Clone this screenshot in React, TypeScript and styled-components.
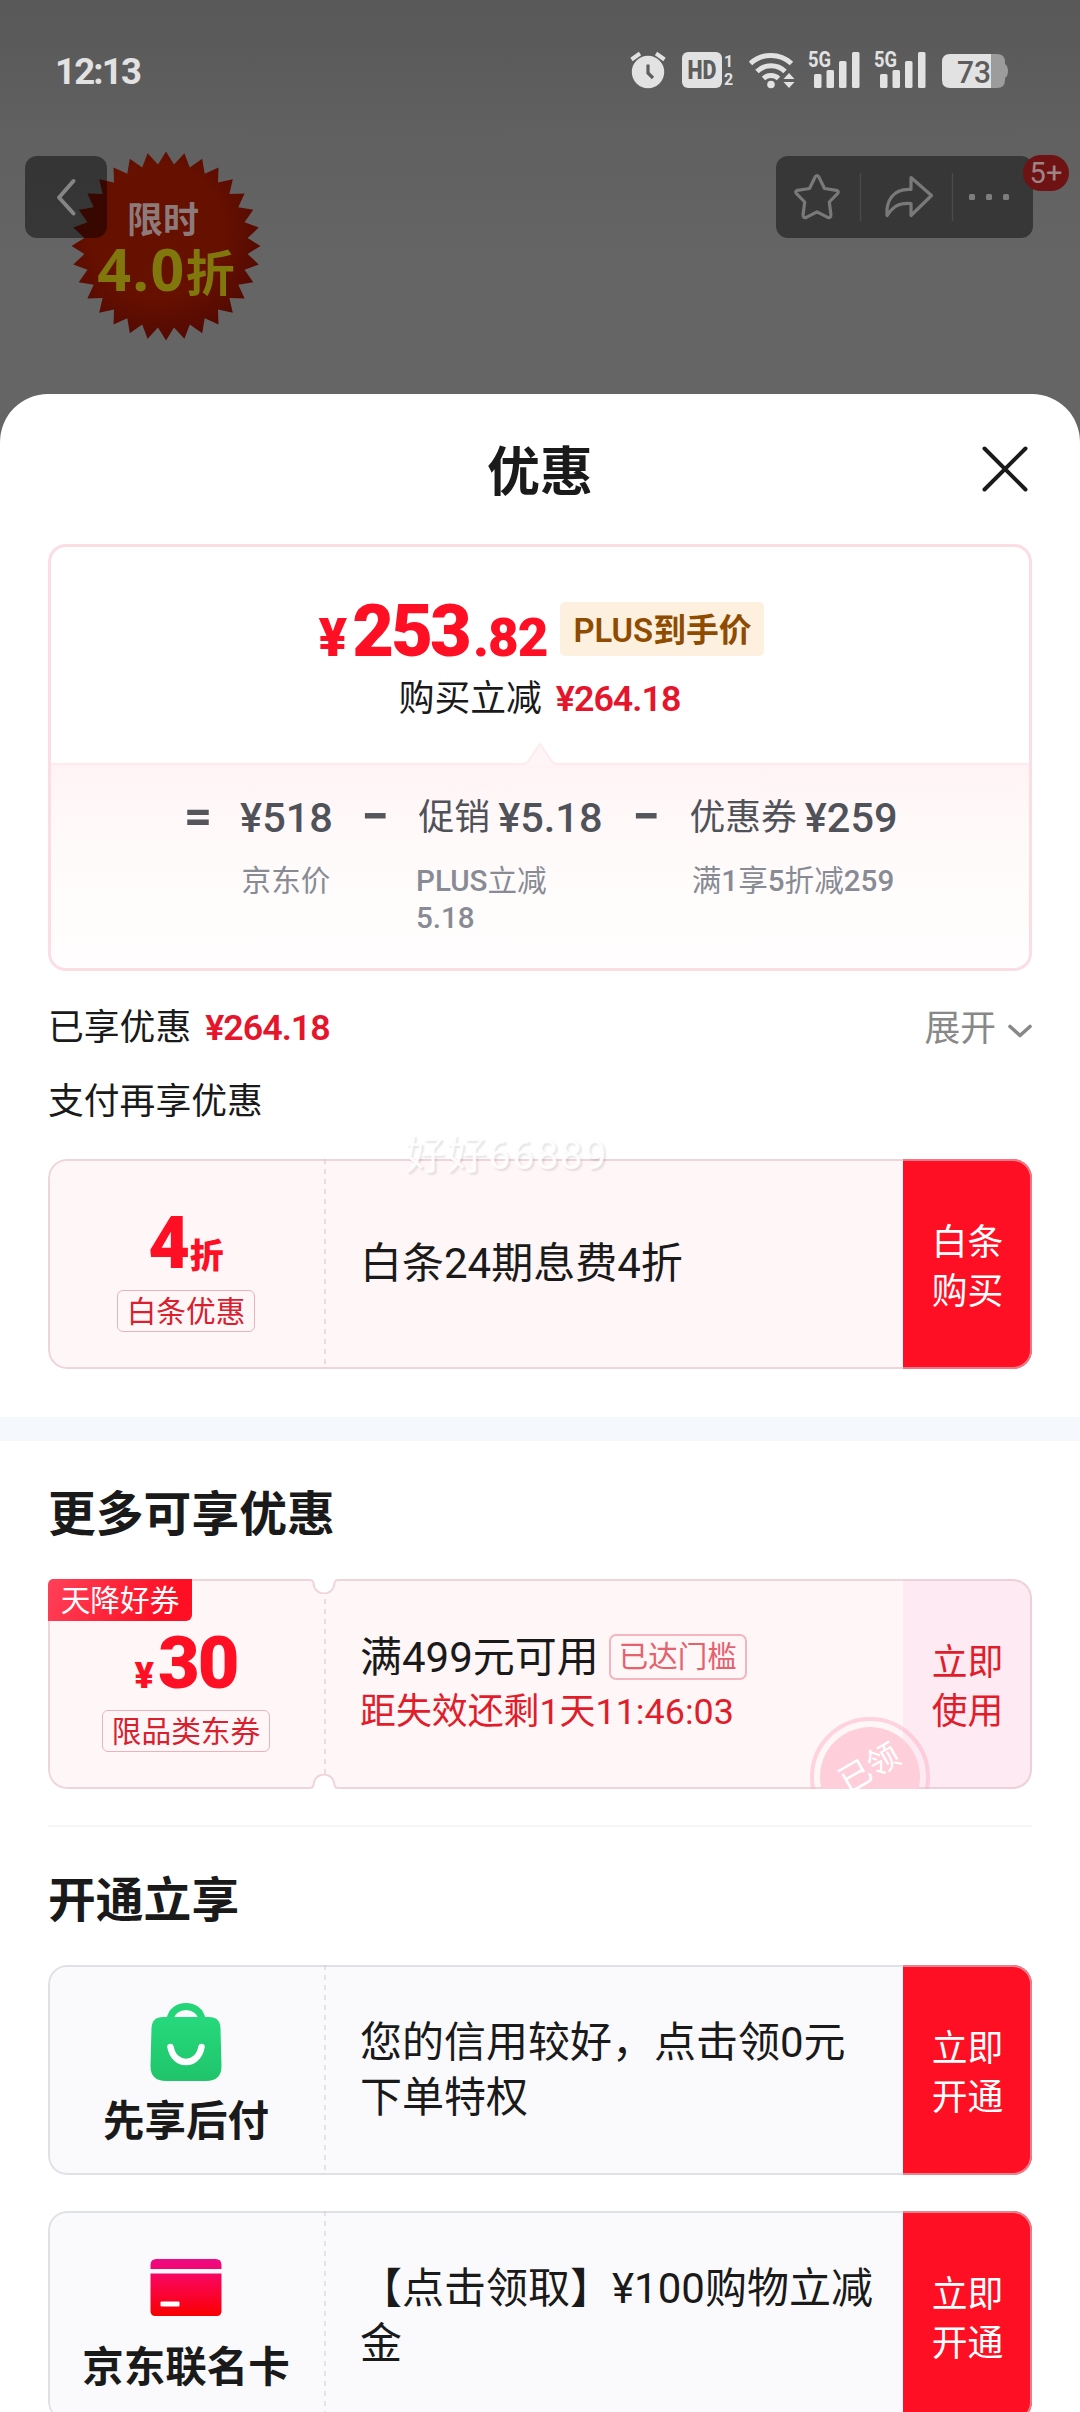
import React from 'react';
import styled, { createGlobalStyle } from 'styled-components';

const GlobalStyle = createGlobalStyle`
  * { box-sizing: border-box; }
  body {
    margin: 0;
    background: #656565;
    font-family: Roboto, "Noto Sans CJK SC", sans-serif;
    color: #1a1a1a;
  }
`;

const Screen = styled.div`
  width: 1080px;
  height: 2412px;
  overflow: hidden;
  display: flex;
  flex-direction: column;
  background: linear-gradient(#585858 0, #606060 130px, #656565 260px);
`;

/* ---------- status bar ---------- */

const StatusBar = styled.div`
  flex: none;
  height: 140px;
  padding: 0 72px 0 55px;
  display: flex;
  align-items: center;
  color: #e2e2e2;
`;

const Clock = styled.span`
  padding-top: 3px;
  font-size: 36.5px;
  line-height: 44px;
  font-weight: 700;
  letter-spacing: -1.8px;
  margin-right: auto;
`;

const StatusIcons = styled.svg`
  display: block;
  width: 380px;
  height: 58px;
`;

/* ---------- product nav ---------- */

const NavBar = styled.div`
  flex: none;
  position: relative;
  height: 254px;
  padding: 16px 47px 0 25px;
  display: flex;
  justify-content: space-between;
  align-items: flex-start;
`;

const SaleBadge = styled.div`
  position: absolute;
  left: 71px;
  top: 11px;
  width: 190px;
  height: 190px;
  padding-top: 48px;
  text-align: center;
  font-weight: 700;
`;

const Burst = styled.svg`
  position: absolute;
  inset: 0;
  width: 190px;
  height: 190px;
`;

const SaleLabel = styled.div`
  position: relative;
  left: -3px;
  font-size: 36px;
  line-height: 44px;
  color: #8d7a7a;
`;

const SaleValue = styled.div`
  position: relative;
  display: flex;
  justify-content: center;
  align-items: baseline;
  font-size: 49px;
  line-height: 50px;
  color: #80780c;
  white-space: nowrap;
`;

const SaleNumber = styled.span`
  font-family: "Open Sans", sans-serif;
  font-size: 59px;
  letter-spacing: 1.4px;
`;

const BackButton = styled.div`
  position: relative;
  width: 82px;
  height: 82px;
  border-radius: 12px;
  background: rgba(0, 0, 0, 0.45);
  display: flex;
  align-items: center;
  justify-content: center;
`;

const Tools = styled.div`
  position: relative;
  width: 257px;
  height: 82px;
  border-radius: 12px;
  background: #373737;
`;

const Count = styled.span`
  position: absolute;
  right: -36px;
  top: -1px;
  width: 46px;
  height: 36px;
  border-radius: 18px;
  background: #6f1214;
  color: #9c8585;
  font-size: 29px;
  line-height: 37px;
  text-align: center;
`;

/* ---------- sheet ---------- */

const Sheet = styled.main`
  flex: 1;
  background: #fff;
  border-radius: 48px 48px 0 0;
  display: flex;
  flex-direction: column;
`;

const SheetHeader = styled.header`
  flex: none;
  position: relative;
  height: 150px;
  padding-top: 8px;
  display: flex;
  align-items: center;
  justify-content: center;
`;

const Title = styled.h1`
  margin: 0;
  font-size: 53px;
  line-height: 70px;
  font-weight: 700;
`;

const CloseIcon = styled.svg`
  position: absolute;
  right: 51px;
  top: 51px;
  width: 48px;
  height: 48px;
`;

const PriceCard = styled.section`
  flex: none;
  height: 427px;
  margin: 0 48px;
  border: 3px solid #fbdde4;
  border-radius: 18px;
  overflow: hidden;
`;

const PriceTop = styled.div`
  height: 216px;
  padding-top: 50px;
  display: flex;
  flex-direction: column;
  align-items: center;
`;

const PriceRow = styled.div`
  display: flex;
  align-items: baseline;
  height: 70px;
  padding-left: 3px;
`;

const Amount = styled.span<{ $size: number; $track?: number; $gap?: number }>`
  font-size: ${p => p.$size}px;
  line-height: 70px;
  font-weight: 900;
  color: #ff0f23;
  letter-spacing: ${p => p.$track ?? 0}px;
  margin-right: ${p => p.$gap ?? 0}px;
`;

const PlusTag = styled.span`
  align-self: flex-start;
  margin: 5px 0 0 13px;
  width: 204px;
  height: 54px;
  border-radius: 5px;
  background: #fdf0df;
  color: #8f4c00;
  font-size: 32.8px;
  line-height: 58px;
  font-weight: 600;
  text-align: center;
  white-space: nowrap;
`;

const Saving = styled.div`
  display: flex;
  margin-right: 1px;
  font-size: 35.8px;
  line-height: 65px;
  white-space: nowrap;
`;

const SavingValue = styled.b`
  margin-left: 14px;
  font-weight: 600;
  color: #e5162c;
  letter-spacing: -1px;
`;

const Formula = styled.div`
  position: relative;
  height: 205px;
  padding: 29px 0 0 3px;
  border-top: 2px solid #fdebef;
  background: linear-gradient(#fff3f5, #fff9f9 30%, #fffcfc 65%, #fffdfd);
  display: flex;
  justify-content: center;
  gap: 32px;
`;

const Pointer = styled.svg`
  position: absolute;
  left: 50%;
  top: -22px;
  margin-left: -18px;
  width: 36px;
  height: 23px;
`;

const Sign = styled.span`
  width: 24px;
  display: flex;
  justify-content: center;
  font-size: 49px;
  line-height: 45px;
  font-weight: 700;
  color: #55565c;
`;

const Term = styled.div<{ $width: number; $align?: string }>`
  width: ${p => p.$width}px;
  text-align: ${p => p.$align ?? 'center'};
  white-space: nowrap;
`;

const TermValue = styled.div`
  display: flex;
  justify-content: center;
  gap: 8px;
  font-size: 35.8px;
  line-height: 48px;
  color: #505259;
`;

const TermNumber = styled.b`
  font-size: 41.5px;
  font-weight: 500;
`;

const TermNote = styled.div`
  margin: 21px -2px 0 -3px;
  font-size: 29.6px;
  line-height: 37px;
  color: #888b94;
`;

const NoteStrong = styled.span`
  font-weight: 500;
`;

const Row = styled.div<{ $height: number; $top?: number; $after?: number }>`
  flex: none;
  height: ${p => p.$height}px;
  margin-bottom: ${p => p.$after ?? 0}px;
  padding: ${p => p.$top ?? 0}px 48px 0;
  display: flex;
  align-items: center;
  font-size: 35.8px;
  line-height: 50px;
  white-space: nowrap;
`;

const Expand = styled.span`
  margin: 2px 0 0 auto;
  display: flex;
  align-items: center;
  gap: 12px;
  color: #888;
`;

const ExpandArrow = styled.svg`
  display: block;
  width: 24px;
  height: 14px;
  margin-top: 4px;
`;

const Band = styled.div`
  flex: none;
  height: 24px;
  margin-top: 48px;
  background: #f5f8fc;
`;

const SectionTitle = styled.h2<{ $height: number; $top: number }>`
  flex: none;
  margin: 0;
  height: ${p => p.$height}px;
  padding: ${p => p.$top}px 48px 0;
  font-size: 47.8px;
  line-height: 60px;
  font-weight: 600;
`;

const Rule = styled.div`
  flex: none;
  height: 2px;
  margin: 36px 48px 0;
  background: #f5f6f8;
`;

/* ---------- coupons ---------- */

type Tone = 'pink' | 'gray';

const Coupon = styled.article<{ $tone: Tone; $gap?: number; $ribbon?: boolean }>`
  flex: none;
  position: relative;
  height: 210px;
  margin: 0 48px ${p => p.$gap ?? 0}px;
  border-radius: ${p => (p.$ribbon ? 5 : 19)}px 19px 19px 19px;
  background: ${p => (p.$tone === 'pink' ? '#fff6f7' : '#fafafd')};
  display: flex;
  overflow: hidden;

  &::after {
    content: '';
    position: absolute;
    inset: 0;
    border: 2px solid ${p => (p.$tone === 'pink' ? 'rgba(226,190,200,.6)' : 'rgba(206,208,212,.6)')};
    border-radius: inherit;
  }
`;

const Stub = styled.div<{ $tone: Tone; $top: number }>`
  width: 278px;
  padding: ${p => p.$top}px 2px 0 0;
  display: flex;
  flex-direction: column;
  align-items: center;
  background: repeating-linear-gradient(
      ${p => (p.$tone === 'pink' ? '#f1d9de' : '#e3e4e8')} 0 5px,
      transparent 5px 10px
    )
    right / 2px 100% no-repeat;
`;

const StubValue = styled.div`
  height: 70px;
  display: flex;
  align-items: baseline;
`;

const StubName = styled.div`
  padding-top: 1px;
  font-size: 41.5px;
  line-height: 54px;
  font-weight: 700;
  white-space: nowrap;
`;

const Pill = styled.span<{ $width: number; $top?: number }>`
  width: ${p => p.$width}px;
  height: 42px;
  margin-top: ${p => p.$top ?? 0}px;
  border: 1px solid #e9b3bd;
  border-radius: 6px;
  color: #d8202f;
  font-size: 29.7px;
  line-height: 41px;
  text-align: center;
  white-space: nowrap;
`;

const Body = styled.div`
  flex: 1;
  padding: 0 0 0 34px;
  display: flex;
  flex-direction: column;
  justify-content: center;
  font-size: 42px;
  line-height: 55.5px;
  white-space: nowrap;
`;

const Condition = styled.div`
  display: flex;
  align-items: center;
  gap: 10px;
`;

const Reached = styled.span`
  width: 138px;
  height: 46px;
  margin-top: -2px;
  border: 2px solid #f5b5bf;
  border-radius: 7px;
  color: #e4616e;
  font-size: 29.5px;
  line-height: 42px;
  text-align: center;
`;

const Countdown = styled.div`
  padding-top: 1px;
  font-size: 35.9px;
  line-height: 52px;
  color: #e11d2b;
`;

const Action = styled.div<{ $soft?: boolean }>`
  width: 129px;
  padding-top: 8px;
  background: ${p => (p.$soft ? '#fdeaf2' : '#ff0f23')};
  color: ${p => (p.$soft ? '#e11d2b' : '#fff')};
  font-size: 35.8px;
  line-height: 48.6px;
  display: flex;
  flex-direction: column;
  align-items: center;
  justify-content: center;
`;

const Ribbon = styled.span`
  position: absolute;
  z-index: 1;
  left: 0;
  top: 0;
  width: 144px;
  height: 42px;
  border-radius: 5px 0 6px 0;
  background: linear-gradient(115deg, #ff4159, #ff0f23 80%);
  color: #fff;
  font-size: 29.7px;
  line-height: 43px;
  text-align: center;
`;

const Notch = styled.svg<{ $bottom?: boolean }>`
  position: absolute;
  z-index: 1;
  left: 258px;
  ${p => (p.$bottom ? 'bottom: 0; transform: scaleY(-1);' : 'top: 0;')}
  width: 36px;
  height: 15px;
`;

const Stamp = styled.div`
  position: absolute;
  z-index: 1;
  left: 762px;
  top: 138px;
  width: 120px;
  height: 120px;
  border: 4px solid rgba(255, 175, 195, 0.5);
  border-radius: 50%;
  padding: 6px;
`;

const StampFace = styled.div`
  width: 100%;
  height: 100%;
  padding-left: 8px;
  border-radius: 50%;
  background: #fecfdb;
  color: #fff;
  font-size: 32px;
  line-height: 84px;
  text-align: center;
  transform: rotate(-30deg);
`;

const Watermark = styled.div`
  position: absolute;
  left: 405px;
  top: 1130px;
  font-size: 40px;
  line-height: 52px;
  letter-spacing: 1.5px;
  color: rgba(255, 255, 255, 0.92);
  text-shadow: 2px 2px 2px rgba(0, 0, 0, 0.1);
`;

const CardIcon = styled.svg`
  display: block;
  width: 72px;
  height: 92px;
`;

const burstPoints = Array.from({ length: 64 }, (_, i) => {
  const r = i % 2 ? 82 : 94.5;
  const a = (i * Math.PI) / 32 - Math.PI / 2;
  return `${(95 + r * Math.cos(a)).toFixed(1)},${(95 + r * Math.sin(a)).toFixed(1)}`;
}).join(' ');

const Signal = ({ x }: { x: number }) => (
  <g transform={`translate(${x} 0)`}>
    <text x="0" y="17" fontSize="22" fontWeight="700" textLength="23" lengthAdjust="spacingAndGlyphs">5G</text>
    <rect x="6" y="24" width="7.5" height="14" rx="1.5" />
    <rect x="18.5" y="20" width="7.5" height="18" rx="1.5" />
    <rect x="31" y="11" width="7.5" height="27" rx="1.5" />
    <rect x="44" y="2" width="7.5" height="36" rx="1.5" />
  </g>
);

const NotchShape = ({ bottom }: { bottom?: boolean }) => (
  <Notch $bottom={bottom} viewBox="0 0 36 15">
    <path d="M0 0H36V1H32Q29 1 28.5 4A10.5 10.5 0 0 1 7.5 4Q7 1 4 1H0Z" fill="#fff" />
    <path d="M0 1H4Q7 1 7.5 4A10.5 10.5 0 0 0 28.5 4Q29 1 32 1H36" fill="none" stroke="#f0d5dc" strokeWidth="2" />
  </Notch>
);

export default function App() {
  return (
    <Screen>
      <GlobalStyle />
      <StatusBar>
        <Clock>12:13</Clock>
        <StatusIcons viewBox="628 -9 380 58" fill="#e2e2e2">
          <circle cx="648" cy="22" r="16.2" />
          <path d="M631.5 9.5L640 3.5M664.5 9.5L656 3.5" stroke="#e2e2e2" strokeWidth="4" />
          <path d="M648 14.5V23L653 28" fill="none" stroke="#5e5e5e" strokeWidth="3.2" />
          <rect x="682" y="2" width="40" height="36" rx="6" />
          <text x="687.5" y="29" fontSize="25" fontWeight="900" fill="#5d5d5d" textLength="29" lengthAdjust="spacingAndGlyphs">HD</text>
          <text x="724" y="17" fontSize="16" fontWeight="700">1</text>
          <text x="724" y="35" fontSize="16" fontWeight="700">2</text>
          <g fill="none" stroke="#e2e2e2" strokeWidth="5">
            <path d="M750.5 13.5A30 30 0 0 1 791.5 13.5" />
            <path d="M757 21.5A20 20 0 0 1 785 21.5" />
            <path d="M763.5 28.5A11 11 0 0 1 778.5 28.5" />
          </g>
          <circle cx="771" cy="34.5" r="3.8" />
          <path d="M783.5 29L789 23L794.5 29ZM783.5 32L789 38L794.5 32Z" />
          <Signal x={808} />
          <Signal x={874} />
          <path d="M991 4H997Q1005 4 1005 12V14Q1008 16 1008 21T1005 28V30Q1005 38 997 38H991Z" fill="#9c9c9c" />
          <path d="M991 4H950Q942 4 942 12V30Q942 38 950 38H991Z" />
          <text x="957" y="32.5" fontSize="32" fontWeight="500" fill="#5d5d5d" textLength="34" lengthAdjust="spacingAndGlyphs">73</text>
        </StatusIcons>
      </StatusBar>

      <NavBar>
        <SaleBadge>
          <Burst viewBox="0 0 190 190">
            <defs>
              <radialGradient id="burst" cx="45%" cy="42%" r="58%">
                <stop offset="0.6" stopColor="#661000" />
                <stop offset="1" stopColor="#540a02" />
              </radialGradient>
            </defs>
            <polygon points={burstPoints} fill="url(#burst)" />
          </Burst>
          <SaleLabel>限时</SaleLabel>
          <SaleValue><SaleNumber>4.0</SaleNumber>折</SaleValue>
        </SaleBadge>
        <BackButton>
          <svg width="82" height="82" fill="none" stroke="#858585" strokeWidth="4" strokeLinecap="round" strokeLinejoin="round">
            <path d="M48.5 25L34 41.5L48.5 57.5" />
          </svg>
        </BackButton>
        <Tools>
          <svg width="257" height="82" fill="none" stroke="#797979" strokeWidth="3.2" strokeLinejoin="round">
            <path d="M39.4 20.5Q41 18.5 42.6 20.5L48.5 32.5L60.5 34.3Q63.5 35.5 61.5 37.7L53.3 46L54.9 58.5Q55 62.5 51.7 61.4L41 55.8L30.3 61.4Q27 62.5 27.1 58.5L28.7 46L20.5 37.7Q18.5 35.5 21.5 34.3L33.5 32.5Z" />
            <path d="M135 21.5L155.5 39.5L135 59.5V47.5C122 46.5 117 51 111 59.5C110 46 116 32.5 135 33.5Z" />
            <path d="M84.5 17V65M176.5 17V65" stroke="#4a4a4a" strokeWidth="1.5" />
            <g fill="#7d7d7d" stroke="none">
              <rect x="193" y="38" width="6" height="6" rx="1.5" />
              <rect x="210" y="38" width="6" height="6" rx="1.5" />
              <rect x="227" y="38" width="6" height="6" rx="1.5" />
            </g>
          </svg>
          <Count>5+</Count>
        </Tools>
      </NavBar>

      <Sheet>
        <SheetHeader>
          <Title>优惠</Title>
          <CloseIcon viewBox="0 0 48 48" stroke="#1a1a1a" strokeWidth="4" strokeLinecap="round">
            <path d="M3.5 3.5L44.5 44.5M44.5 3.5L3.5 44.5" />
          </CloseIcon>
        </SheetHeader>

        <PriceCard>
          <PriceTop>
            <PriceRow>
              <Amount $size={53} $gap={5}>¥</Amount>
              <Amount $size={72} $track={-2.8} $gap={4}>253</Amount>
              <Amount $size={53} $track={-1}>.82</Amount>
              <PlusTag>PLUS到手价</PlusTag>
            </PriceRow>
            <Saving>
              购买立减<SavingValue>¥264.18</SavingValue>
            </Saving>
          </PriceTop>
          <Formula>
            <Pointer viewBox="0 0 36 23">
              <path d="M0 21Q5 21 7 17L18 1L29 17Q31 21 36 21V23H0Z" fill="#fff4f6" />
              <path d="M0 21Q5 21 7 17L18 1L29 17Q31 21 36 21" fill="none" stroke="#fdebef" strokeWidth="2" />
            </Pointer>
            <Sign>=</Sign>
            <Term $width={89}>
              <TermValue><TermNumber>¥518</TermNumber></TermValue>
              <TermNote>京东价</TermNote>
            </Term>
            <Sign>−</Sign>
            <Term $width={183} $align="left">
              <TermValue>促销<TermNumber>¥5.18</TermNumber></TermValue>
              <TermNote><NoteStrong>PLUS</NoteStrong>立减<br /><NoteStrong>5.18</NoteStrong></TermNote>
            </Term>
            <Sign>−</Sign>
            <Term $width={207}>
              <TermValue>优惠券<TermNumber>¥259</TermNumber></TermValue>
              <TermNote>
                满<NoteStrong>1</NoteStrong>享<NoteStrong>5</NoteStrong>折减<NoteStrong>259</NoteStrong>
              </TermNote>
            </Term>
          </Formula>
        </PriceCard>

        <Row $height={94} $top={19}>
          已享优惠<SavingValue>¥264.18</SavingValue>
          <Expand>
            展开
            <ExpandArrow fill="none" stroke="#888" strokeWidth="3.6" strokeLinecap="round" strokeLinejoin="round">
              <path d="M2 2.5L12 11.5L22 2.5" />
            </ExpandArrow>
          </Expand>
        </Row>
        <Row $height={68} $top={6} $after={26}>支付再享优惠</Row>

        <Coupon $tone="pink">
          <Stub $tone="pink" $top={50}>
            <StubValue>
              <Amount $size={72}>4</Amount>
              <Amount $size={34}>折</Amount>
            </StubValue>
            <Pill $width={138} $top={11}>白条优惠</Pill>
          </Stub>
          <Body>白条24期息费4折</Body>
          <Action><span>白条</span><span>购买</span></Action>
        </Coupon>

        <Band />

        <SectionTitle $height={138} $top={44}>更多可享优惠</SectionTitle>
        <Coupon $tone="pink" $ribbon>
          <Ribbon>天降好券</Ribbon>
          <NotchShape />
          <NotchShape bottom />
          <Stub $tone="pink" $top={50}>
            <StubValue>
              <Amount $size={36} $gap={4}>¥</Amount>
              <Amount $size={72} $track={-2}>30</Amount>
            </StubValue>
            <Pill $width={168} $top={11}>限品类东券</Pill>
          </Stub>
          <Body>
            <Condition>满499元可用<Reached>已达门槛</Reached></Condition>
            <Countdown>距失效还剩1天11:46:03</Countdown>
          </Body>
          <Action $soft><span>立即</span><span>使用</span></Action>
          <Stamp><StampFace>已领</StampFace></Stamp>
        </Coupon>
        <Rule />

        <SectionTitle $height={138} $top={44}>开通立享</SectionTitle>
        <Coupon $tone="gray" $gap={36}>
          <Stub $tone="gray" $top={37}>
            <CardIcon viewBox="0 0 72 92">
              <defs>
                <linearGradient id="bag" x1="0" y1="0" x2="0" y2="1">
                  <stop offset="0" stopColor="#26d97c" />
                  <stop offset="1" stopColor="#20c46a" />
                </linearGradient>
              </defs>
              <path d="M20 18C22 0 50 0 52 18" fill="none" stroke="#24d578" strokeWidth="7" />
              <path d="M13 15H59Q70 15 70.5 26L71.5 64Q71.5 79 56 79H16Q.5 79 .5 64L1.5 26Q2 15 13 15Z" fill="url(#bag)" />
              <path d="M20.5 45C24 65 48 65 51.5 45" fill="none" stroke="#fff" strokeWidth="6.5" strokeLinecap="round" />
            </CardIcon>
            <StubName>先享后付</StubName>
          </Stub>
          <Body>
            <span>您的信用较好，点击领0元</span>
            <span>下单特权</span>
          </Body>
          <Action><span>立即</span><span>开通</span></Action>
        </Coupon>
        <Coupon $tone="gray">
          <Stub $tone="gray" $top={37}>
            <CardIcon viewBox="0 0 72 92">
              <defs>
                <linearGradient id="card" gradientUnits="userSpaceOnUse" x1="0" y1="11" x2="0" y2="68">
                  <stop offset="0" stopColor="#ee0a86" />
                  <stop offset="0.5" stopColor="#fa0443" />
                  <stop offset="1" stopColor="#f90000" />
                </linearGradient>
              </defs>
              <path d="M.5 21V17Q.5 11 6.5 11H65.5Q71.5 11 71.5 17V21ZM.5 25.5H71.5V63Q71.5 68 66.5 68H5.5Q.5 68 .5 63Z" fill="url(#card)" />
              <rect x="10.5" y="53.5" width="19" height="5" rx="1" fill="#fff" />
            </CardIcon>
            <StubName>京东联名卡</StubName>
          </Stub>
          <Body>
            <span>【点击领取】¥100购物立减</span>
            <span>金</span>
          </Body>
          <Action><span>立即</span><span>开通</span></Action>
        </Coupon>
      </Sheet>
      <Watermark>好好66889</Watermark>
    </Screen>
  );
}
